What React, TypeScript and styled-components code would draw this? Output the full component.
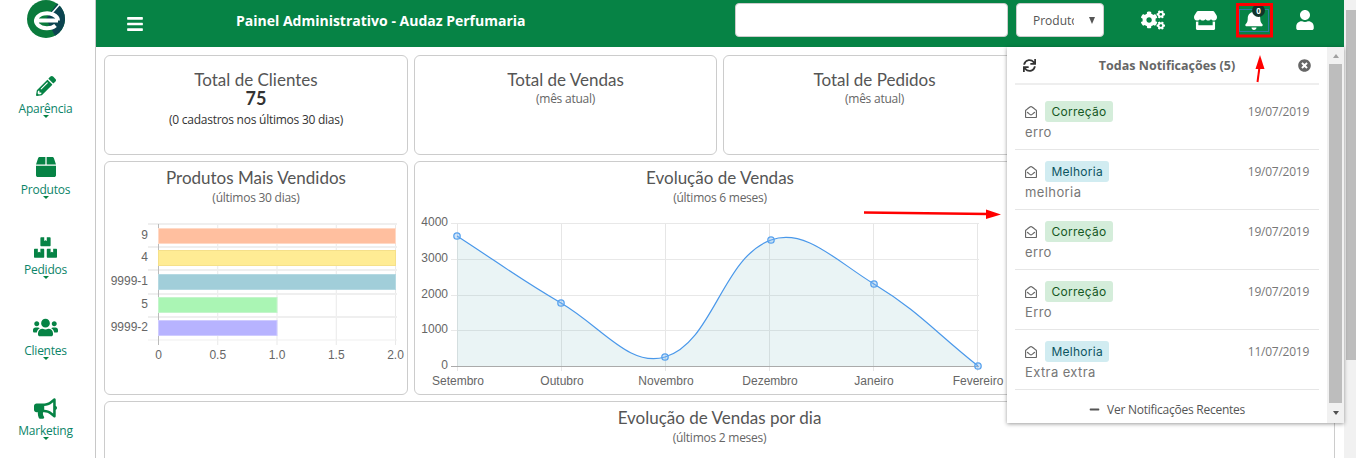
import { createGlobalStyle } from 'styled-components';
import styled from 'styled-components';
import {
  FaBars,
  FaBell,
  FaBox,
  FaBoxes,
  FaBullhorn,
  FaCogs,
  FaMinus,
  FaPencilAlt,
  FaRegEnvelopeOpen,
  FaStore,
  FaSync,
  FaTimesCircle,
  FaUser,
  FaUsers,
} from 'react-icons/fa';

type Point = [number, number];

const GREEN = '#068345';

const menuItems = [
  { label: 'Aparência', size: 20, icon: <FaPencilAlt /> },
  { label: 'Produtos', size: 20, icon: <FaBox /> },
  { label: 'Pedidos', size: 23, icon: <FaBoxes /> },
  { label: 'Clientes', size: 25, icon: <FaUsers /> },
  { label: 'Marketing', size: 23, icon: <FaBullhorn /> },
];

const notifications = [
  { tag: 'Correção', date: '19/07/2019', text: 'erro' },
  { tag: 'Melhoria', date: '19/07/2019', text: 'melhoria' },
  { tag: 'Correção', date: '19/07/2019', text: 'erro' },
  { tag: 'Correção', date: '19/07/2019', text: 'Erro' },
  { tag: 'Melhoria', date: '11/07/2019', text: 'Extra extra' },
];

const bars = [
  { label: '9', value: 2, fill: '#ffbf9f', line: '#ffd9c6', y: 5 },
  { label: '4', value: 2, fill: '#ffec94', line: '#f5e08a', y: 27 },
  { label: '9999-1', value: 2, fill: '#a1ced9', line: '#b5d9e2', y: 51 },
  { label: '5', value: 1, fill: '#aaf5b4', line: '#c4f5cb', y: 74 },
  { label: '9999-2', value: 1, fill: '#b7b3ff', line: '#cfccff', y: 97 },
];

const salesPoints: Point[] = [
  [42, 13],
  [146, 80],
  [250, 134],
  [356, 17],
  [459, 61],
  [563, 143],
];

const months = ['Setembro', 'Outubro', 'Novembro', 'Dezembro', 'Janeiro', 'Fevereiro'];

// same curve as chart.js with tension 0.4
function splinePath(points: Point[]) {
  const controls = points.map((cur, i) => {
    const prev = points[i - 1] ?? cur;
    const next = points[i + 1] ?? cur;
    const d01 = Math.hypot(cur[0] - prev[0], cur[1] - prev[1]);
    const d12 = Math.hypot(next[0] - cur[0], next[1] - cur[1]);
    const total = d01 + d12 || 1;
    const fa = (0.4 * d01) / total;
    const fb = (0.4 * d12) / total;
    return {
      before: [cur[0] - fa * (next[0] - prev[0]), cur[1] - fa * (next[1] - prev[1])],
      after: [cur[0] + fb * (next[0] - prev[0]), cur[1] + fb * (next[1] - prev[1])],
    };
  });
  let d = `M${points[0][0]} ${points[0][1]}`;
  for (let i = 1; i < points.length; i++) {
    const a = controls[i - 1].after;
    const b = controls[i].before;
    d += ` C${a[0]} ${a[1]} ${b[0]} ${b[1]} ${points[i][0]} ${points[i][1]}`;
  }
  return d;
}

function ProductsChart() {
  const ticks = ['0', '0.5', '1.0', '1.5', '2.0'];
  const axis = 53.5;
  return (
    <ChartSvg width="296" height="160" viewBox="0 0 296 160">
      {[0, 1, 2, 3, 4].map((i) => (
        <line key={i} x1={axis + i * 59.25} x2={axis + i * 59.25} y1="1" y2="122" stroke="#e9e9e9" />
      ))}
      {[1, 24, 47, 71, 94, 117].map((y) => (
        <line key={y} x1="43" x2="292" y1={y} y2={y} stroke="#efefef" strokeWidth={y === 117 ? 1 : 2} />
      ))}
      <line x1={axis} x2={axis} y1="1" y2="122" stroke="#bbb" />
      {bars.map((bar) => (
        <g key={bar.label}>
          <rect x={axis} y={bar.y + 0.5} width={bar.value * 118.5} height="15" fill={bar.fill} stroke={bar.line} />
          <ChartLabel x="43" y={bar.y + 10.5} textAnchor="end">
            {bar.label}
          </ChartLabel>
        </g>
      ))}
      {ticks.map((tick, i) => (
        <ChartLabel key={tick} x={axis + i * 59.25} y="136" textAnchor="middle">
          {tick}
        </ChartLabel>
      ))}
    </ChartSvg>
  );
}

function SalesChart() {
  const curve = splinePath(salesPoints);
  return (
    <ChartSvg width="610" height="172" viewBox="0 0 610 172">
      {[0, 1, 2, 3, 4, 5].map((i) => (
        <line key={i} x1={42.5 + i * 104} x2={42.5 + i * 104} y1="0" y2="148" stroke="#e6e6e6" />
      ))}
      {[0, 36, 72, 107].map((y) => (
        <line key={y} x1="36" x2="564" y1={y + 0.5} y2={y + 0.5} stroke="#e8e8e8" />
      ))}
      <path d={`${curve} L563 143 L42 143 Z`} fill="rgba(90,170,175,0.13)" />
      <line x1="36" x2="564" y1="143.5" y2="143.5" stroke="#aaa" />
      <path d={curve} fill="none" stroke="#4a98ea" strokeWidth="1.2" />
      {salesPoints.map(([x, y]) => (
        <circle key={x} cx={x} cy={y} r="3.2" fill="rgba(120,180,240,0.35)" stroke="#5aa3ee" strokeWidth="1.3" />
      ))}
      {['4000', '3000', '2000', '1000', '0'].map((tick, i) => (
        <ChartLabel key={tick} x="33" y={i * 35.8 + 3} textAnchor="end">
          {tick}
        </ChartLabel>
      ))}
      {months.map((month, i) => (
        <ChartLabel key={month} x={43 + i * 104} y="162" textAnchor="middle">
          {month}
        </ChartLabel>
      ))}
    </ChartSvg>
  );
}

export default function App() {
  return (
    <Page>
      <GlobalStyle />
      <Sidebar>
        <Logo viewBox="0 0 40 40" width="40" height="40">
          <circle cx="20" cy="20" r="19" fill="#0a7a3c" />
          <path d="M31 4.5A19 19 0 0 1 29 36.7L20 20Z" fill="#0c4350" />
          <path
            d="M10 21.5h22M29.5 26.5A11 7.5 0 1 1 32 21.5"
            fill="none"
            stroke="#fff"
            strokeWidth="4"
          />
          <path d="M26 14L34 5" stroke="#fff" strokeWidth="1.5" />
        </Logo>
        <MenuList>
          {menuItems.map((item) => (
            <MenuItem key={item.label}>
              <MenuIcon $size={item.size}>{item.icon}</MenuIcon>
              <MenuLabel>{item.label}</MenuLabel>
              <MenuCaret />
            </MenuItem>
          ))}
        </MenuList>
      </Sidebar>
      <Main>
        <Header>
          <Burger>
            <FaBars />
          </Burger>
          <HeaderTitle>Painel Administrativo - Audaz Perfumaria</HeaderTitle>
          <SearchInput />
          <SelectBox>
            <SearchSelect defaultValue="Produto">
              <option>Produto</option>
            </SearchSelect>
          </SelectBox>
          <HeaderIcons>
            <HeaderIcon $size={24}>
              <FaCogs />
            </HeaderIcon>
            <HeaderIcon $size={23}>
              <FaStore />
            </HeaderIcon>
            <HeaderIcon $size={20} $focused>
              <FaBell />
              <Badge>0</Badge>
            </HeaderIcon>
            <HeaderIcon $size={20}>
              <FaUser />
            </HeaderIcon>
          </HeaderIcons>
        </Header>
        <Content>
          <Card $area="1 / 1 / 2 / 2">
            <CardTitle>Total de Clientes</CardTitle>
            <CardValue>75</CardValue>
            <CardNote $dark>(0 cadastros nos últimos 30 dias)</CardNote>
          </Card>
          <Card $area="1 / 2 / 2 / 3">
            <CardTitle>Total de Vendas</CardTitle>
            <CardNote>(mês atual)</CardNote>
          </Card>
          <Card $area="1 / 3 / 2 / 4">
            <CardTitle>Total de Pedidos</CardTitle>
            <CardNote>(mês atual)</CardNote>
          </Card>
          <Card $area="1 / 4 / 2 / 5" />
          <Card $area="2 / 1 / 3 / 2" $tight>
            <CardTitle>Produtos Mais Vendidos</CardTitle>
            <CardNote $tight>(últimos 30 dias)</CardNote>
            <ChartSlot>
              <ProductsChart />
            </ChartSlot>
          </Card>
          <Card $area="2 / 2 / 3 / 4" $tight>
            <CardTitle>Evolução de Vendas</CardTitle>
            <CardNote $tight>(últimos 6 meses)</CardNote>
            <ChartSlot>
              <SalesChart />
            </ChartSlot>
          </Card>
          <Card $area="2 / 4 / 3 / 5" $tight />
          <Card $area="3 / 1 / 4 / 5" $tight>
            <CardTitle>Evolução de Vendas por dia</CardTitle>
            <CardNote $tight>(últimos 2 meses)</CardNote>
          </Card>
        </Content>
      </Main>
      <PageScroll>
        <PageThumb />
      </PageScroll>

      <Panel>
        <PanelBody>
          <PanelHead>
            <PanelHeadIcon>
              <FaSync />
            </PanelHeadIcon>
            <PanelTitle>Todas Notificações (5)</PanelTitle>
            <PanelClose>
              <FaTimesCircle />
            </PanelClose>
          </PanelHead>
          <NoteList>
            {notifications.map((item, i) => (
              <NoteRow key={i}>
                <NoteTop>
                  <FaRegEnvelopeOpen />
                  <Tag $kind={item.tag}>{item.tag}</Tag>
                  <NoteDate>{item.date}</NoteDate>
                </NoteTop>
                <NoteText>{item.text}</NoteText>
              </NoteRow>
            ))}
          </NoteList>
          <PanelFoot>
            <FaMinus />
            Ver Notificações Recentes
          </PanelFoot>
        </PanelBody>
        <PanelScroll>
          <ScrollButton $up />
          <PanelThumb />
          <ScrollButton />
        </PanelScroll>
      </Panel>

      <Annotations width="1356" height="458" viewBox="0 0 1356 458">
        <rect x="1237.5" y="4.5" width="34" height="31.5" fill="none" stroke="#f00" strokeWidth="3" />
        <path d="M1257.5 82L1259.5 67" stroke="#f00" strokeWidth="2" />
        <path d="M1260 55L1255.5 69L1264.5 69Z" fill="#f00" />
        <path d="M864 212.5L988 214" stroke="#f00" strokeWidth="2.5" />
        <path d="M1001 214.5L986 209.5L986 219Z" fill="#f00" />
      </Annotations>
    </Page>
  );
}

const GlobalStyle = createGlobalStyle`
  html, body {
    margin: 0;
    height: 458px;
    overflow: hidden;
    background: #fff;
    font-family: "Open Sans", "Liberation Sans", sans-serif;
  }
  * {
    box-sizing: border-box;
  }
`;

const Page = styled.div`
  position: relative;
  display: flex;
  width: 1356px;
  height: 458px;
  overflow: hidden;
`;

const Sidebar = styled.aside`
  flex: 0 0 96px;
  display: flex;
  flex-direction: column;
  align-items: center;
  border-right: 1px solid #c8c8c8;
  padding-right: 4px;
`;

const Logo = styled.svg`
  margin-top: -1px;
  flex: none;
`;

const MenuList = styled.div`
  display: flex;
  flex-direction: column;
  gap: 33.5px;
  margin-top: 36px;
`;

const MenuItem = styled.div`
  display: flex;
  flex-direction: column;
  align-items: center;
  height: 47px;
`;

const MenuIcon = styled.div<{ $size: number }>`
  height: 22px;
  display: flex;
  align-items: center;
  font-size: ${(props) => props.$size}px;
  color: ${GREEN};
`;

const MenuLabel = styled.div`
  margin-top: 4px;
  font-size: 12px;
  letter-spacing: -0.25px;
  line-height: 16px;
  color: #0b8468;
`;

const MenuCaret = styled.div`
  margin-top: -2px;
  width: 0;
  height: 0;
  border-left: 3px solid transparent;
  border-right: 3px solid transparent;
  border-top: 3px solid ${GREEN};
`;

const Main = styled.div`
  flex: 1;
  min-width: 0;
  display: flex;
  flex-direction: column;
`;

const Header = styled.header`
  flex: 0 0 47px;
  display: flex;
  align-items: center;
  background: ${GREEN};
  padding-left: 30px;
  margin-right: 12px;
`;

const Burger = styled.div`
  font-size: 18px;
  color: #fff;
  line-height: 0;
`;

const HeaderTitle = styled.h1`
  margin: -6px 0 0 92px;
  width: 499px;
  font-family: "Open Sans", sans-serif;
  font-size: 14px;
  font-weight: 700;
  color: #fff;
  white-space: nowrap;
`;

const SearchInput = styled.input`
  width: 273px;
  height: 34px;
  margin-top: -7px;
  border: 1px solid #ccc;
  border-radius: 4px;
  background: #fff;
`;

const SelectBox = styled.div`
  position: relative;
  margin: -7px 0 0 8px;
  line-height: 0;
  &::after {
    content: '';
    position: absolute;
    top: 14px;
    right: 9px;
    border-left: 3.5px solid transparent;
    border-right: 3.5px solid transparent;
    border-top: 7px solid #555;
  }
`;

const SearchSelect = styled.select`
  appearance: none;
  width: 88px;
  height: 34px;
  padding: 0 29px 0 16px;
  border: 1px solid #ccc;
  border-radius: 4px;
  background: #fff;
  color: #555;
  font-family: "Open Sans", sans-serif;
  font-size: 12px;
`;

const HeaderIcons = styled.div`
  display: flex;
  gap: 28px;
  margin: -7px 0 0 37px;
`;

const HeaderIcon = styled.div<{ $size: number; $focused?: boolean }>`
  position: relative;
  width: ${(props) => (props.$focused ? '28px' : '24px')};
  height: 21px;
  margin-left: ${(props) => (props.$focused ? '-5px' : '0')};
  display: flex;
  align-items: center;
  justify-content: center;
  font-size: ${(props) => props.$size}px;
  color: #fff;
  ${(props) => props.$focused && 'outline: 1.5px solid #2a7fa0;'}
  &:last-child {
    width: 18px;
  }
`;

const Badge = styled.span`
  position: absolute;
  top: -6px;
  right: 3px;
  width: 13px;
  height: 13px;
  border-radius: 50%;
  background: #12352a;
  color: #fff;
  font-size: 8px;
  font-weight: 700;
  line-height: 13px;
  text-align: center;
`;

const Content = styled.main`
  flex: 1;
  display: grid;
  grid-template-columns: 304px repeat(3, 303px);
  grid-template-rows: 100px 234px 120px;
  gap: 6px;
  padding: 8px 0 0 8px;
`;

const Card = styled.section<{ $area: string; $tight?: boolean }>`
  grid-area: ${(props) => props.$area};
  display: flex;
  flex-direction: column;
  align-items: center;
  padding-top: ${(props) => (props.$tight ? '5.5px' : '14px')};
  border: 1px solid #ccc;
  border-radius: 6px;
  overflow: hidden;
`;

const CardTitle = styled.h3`
  margin: 0;
  font-family: "Lato", sans-serif;
  font-size: 17px;
  font-weight: 400;
  line-height: 19px;
  color: #555;
`;

const CardValue = styled.div`
  font-family: "Lato", sans-serif;
  font-size: 18px;
  font-weight: 700;
  line-height: 18px;
  color: #333;
`;

const CardNote = styled.div<{ $dark?: boolean; $tight?: boolean }>`
  margin-top: ${(props) => (props.$dark ? '4px' : props.$tight ? '2px' : '1px')};
  font-size: 12px;
  letter-spacing: -0.25px;
  line-height: 17px;
  color: ${(props) => (props.$dark ? '#333' : '#666')};
`;

const ChartSlot = styled.div`
  align-self: stretch;
  margin-top: 17.5px;
`;

const ChartSvg = styled.svg`
  display: block;
  overflow: visible;
`;

const ChartLabel = styled.text`
  font-family: "Liberation Sans", Arial, sans-serif;
  font-size: 12px;
  fill: #666;
`;

const PageScroll = styled.div`
  position: absolute;
  top: 0;
  right: 0;
  bottom: 0;
  width: 12px;
  padding-left: 2px;
  background: #f1f1f1;
`;

const PageThumb = styled.div`
  margin-top: 10px;
  height: 350px;
  background: #bdbdbd;
`;

const Panel = styled.div`
  position: absolute;
  top: 47px;
  left: 1007px;
  width: 337px;
  height: 376px;
  display: flex;
  background: #fff;
  box-shadow: 0 1px 4px rgba(0, 0, 0, 0.4);
`;

const PanelBody = styled.div`
  flex: 1;
  min-width: 0;
  padding: 0 8px;
`;

const PanelHead = styled.div`
  height: 38px;
  display: flex;
  align-items: center;
  border-bottom: 2px solid #eee;
  padding: 0 8px;
  color: #555;
`;

const PanelHeadIcon = styled.span`
  font-size: 13px;
  line-height: 0;
  color: #333;
`;

const PanelTitle = styled.div`
  flex: 1;
  text-align: center;
  font-size: 12.5px;
  font-weight: 700;
  color: #666;
`;

const PanelClose = styled.span`
  font-size: 13px;
  line-height: 0;
  color: #666;
`;

const NoteList = styled.div`
  padding-top: 5px;
`;

const NoteRow = styled.div`
  height: 60px;
  border-bottom: 1px solid #e6e6e6;
  padding: 11px 10px 0;
`;

const NoteTop = styled.div`
  display: flex;
  align-items: center;
  color: #666;
  font-size: 12px;
`;

const Tag = styled.span<{ $kind: string }>`
  margin-left: 8px;
  padding: 0 6.5px;
  height: 21px;
  line-height: 21px;
  border-radius: 3px;
  font-family: "Inter", sans-serif;
  font-size: 12px;
  letter-spacing: 0.25px;
  background: ${(props) => (props.$kind === 'Correção' ? '#d4edda' : '#d1ecf1')};
  color: ${(props) => (props.$kind === 'Correção' ? '#155724' : '#0c5460')};
`;

const NoteDate = styled.span`
  margin-left: auto;
  font-size: 12px;
  letter-spacing: -0.25px;
  color: #777;
`;

const NoteText = styled.div`
  margin-top: 1px;
  font-family: "Inter", sans-serif;
  font-size: 13px;
  letter-spacing: 0.4px;
  line-height: 18px;
  color: #777;
`;

const PanelFoot = styled.div`
  display: flex;
  align-items: center;
  justify-content: center;
  gap: 7px;
  height: 33px;
  padding-top: 6px;
  font-size: 12px;
  letter-spacing: -0.25px;
  color: #555;
  svg {
    font-size: 11px;
  }
`;

const PanelScroll = styled.div`
  flex: 0 0 17px;
  display: flex;
  flex-direction: column;
  padding: 0 2px;
  background: #f1f1f1;
`;

const PanelThumb = styled.div`
  flex: 1;
  background: #bdbdbd;
`;

const ScrollButton = styled.div<{ $up?: boolean }>`
  flex: 0 0 ${(props) => (props.$up ? '17px' : '20px')};
  display: flex;
  justify-content: center;
  align-items: ${(props) => (props.$up ? 'center' : 'flex-start')};
  padding-top: ${(props) => (props.$up ? '0' : '8px')};
  &::after {
    content: '';
    border-left: 3.5px solid transparent;
    border-right: 3.5px solid transparent;
    ${(props) => (props.$up ? 'border-bottom: 4px solid #a0a0a0;' : 'border-top: 4px solid #505050;')}
  }
`;

const Annotations = styled.svg`
  position: absolute;
  inset: 0;
  pointer-events: none;
`;
